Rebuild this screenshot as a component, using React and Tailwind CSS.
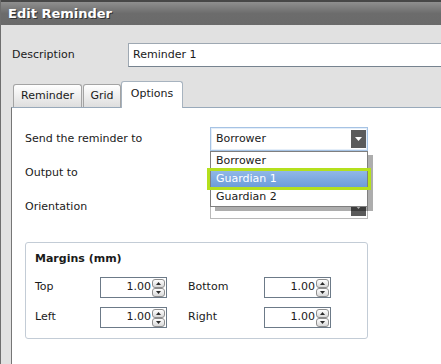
import React from "react";

// small triangle used by select buttons and spinners
const Tri = ({ up, w = 7, h = 4, color = "#fff" }) => (
  <svg width={w} height={h} viewBox={`0 0 ${w} ${h}`}>
    <polygon
      points={up ? `0,${h} ${w / 2},0 ${w},${h}` : `0,0 ${w},0 ${w / 2},${h}`}
      fill={color}
    />
  </svg>
);

const Select = ({ value, focused }) => (
  <div
    className={`flex h-[24px] w-[158px] items-center bg-white pl-[5px] pr-px border ${
      focused
        ? "border-[#a6c3e4] shadow-[inset_0_0_0_1px_#e4eef9]"
        : "border-[#b9b9b9]"
    }`}>
    <span className="flex-1">{value}</span>
    <div className="flex h-[18px] w-[15px] items-center justify-center bg-[#5b5b5b]">
      <Tri />
    </div>
  </div>
);

const SpinBtn = ({ up }) => (
  <div className="flex h-[9px] w-[13px] items-center justify-center rounded-[3px] border border-[#8e8e8e] bg-gradient-to-b from-white to-[#d9d9d9]">
    <Tri up={up} w={5} h={3} color="#2b2b2b" />
  </div>
);

const SpinBox = () => (
  <div className="flex h-[21px] w-[67px] items-center border border-[#6c7a88] bg-white pr-px">
    <span className="flex-1 text-right">1.00</span>
    <div className="ml-px flex flex-col">
      <SpinBtn up />
      <SpinBtn />
    </div>
  </div>
);

const Tab = ({ label, active, width }) =>
  active ? (
    <div
      className={`relative z-10 -mb-px flex h-[27px] ${width} items-start justify-center rounded-t-[3px] border border-b-0 border-[#a7b3bf] bg-white pt-[4px]`}>
      {label}
    </div>
  ) : (
    <div
      className={`flex h-[23px] ${width} items-center justify-center rounded-t-[3px] border border-b-0 border-[#a3a3a3] bg-gradient-to-b from-white to-[#dedede]`}>
      {label}
    </div>
  );

export default function App() {
  return (
    <div className="flex h-[364px] w-[441px] flex-col overflow-hidden border-l border-[#6e6e6e] bg-[#e1e1e1] font-['DejaVu_Sans',Verdana,sans-serif] text-[11px] text-[#1a1a1a]">
      {/* Title bar */}
      <div className="flex h-[25px] shrink-0 items-center border-t-2 border-[#474747] bg-gradient-to-b from-[#8f8f8f] via-[#6c6c6c] to-[#6a6a6a] pl-[7px] text-[13px] font-bold text-white [text-shadow:1px_1px_0_#333]">
        Edit Reminder
      </div>

      {/* Description */}
      <div className="mt-[18px] flex h-[24px] items-center pl-[11px]">
        <span className="w-[116px] shrink-0">Description</span>
        <div className="flex h-[24px] w-[330px] shrink-0 items-center border border-[#9ea8b2] border-b-[#76838f] bg-white pl-[4px]">
          Reminder 1
        </div>
      </div>

      {/* Tabs */}
      <div className="mt-[14px] ml-[12px] flex items-end">
        <Tab label="Reminder" width="w-[69px]" />
        <div className="w-[1px]" />
        <Tab label="Grid" width="w-[38px]" />
        <Tab label="Options" width="w-[62px]" active />
      </div>

      {/* Tab panel */}
      <div className="ml-[10px] flex flex-1 flex-col border-l border-t border-l-[#767676] border-t-[#98a9ba] bg-white pl-[13px] pt-[19px]">
        <div className="flex flex-col gap-[10px]">
          <div className="flex h-[24px] items-center">
            <span className="w-[185px] shrink-0">Send the reminder to</span>
            <div className="relative">
              <Select value="Borrower" focused />
              {/* open dropdown list */}
              <div className="absolute left-0 top-[24px] z-20 w-[158px] border border-[#7f7f7f] bg-white shadow-[5px_4px_0_rgba(0,0,0,0.32)]">
                <div className="flex h-[18px] items-center pl-[5px] pt-px">Borrower</div>
                <div className="relative flex h-[18px] items-center bg-gradient-to-b from-[#92b9e8] to-[#6b9bd9] pl-[5px] text-white">
                  <span className="absolute -left-[4px] -right-[4px] -top-[2px] -bottom-[2px] border-[3px] border-[#b4e01d]" />
                  Guardian 1
                </div>
                <div className="flex h-[18px] items-center pl-[5px]">Guardian 2</div>
              </div>
            </div>
          </div>
          <div className="flex h-[24px] items-center">
            <span className="w-[185px] shrink-0">Output to</span>
            <Select value="" />
          </div>
          <div className="flex h-[24px] items-center">
            <span className="w-[185px] shrink-0">Orientation</span>
            <Select value="" />
          </div>
        </div>

        {/* Margins group */}
        <div className="mt-[23px] w-[343px] rounded-[3px] border border-[#c3ccd6] pb-[10px] pl-[9px] pt-[9px]">
          <div className="font-bold leading-[13px]">Margins (mm)</div>
          <div className="mt-[12px] flex h-[21px] items-center">
            <span className="w-[65px] shrink-0">Top</span>
            <SpinBox />
            <span className="ml-[21px] w-[76px] shrink-0">Bottom</span>
            <SpinBox />
          </div>
          <div className="mt-[9px] flex h-[21px] items-center">
            <span className="w-[65px] shrink-0">Left</span>
            <SpinBox />
            <span className="ml-[21px] w-[76px] shrink-0">Right</span>
            <SpinBox />
          </div>
        </div>
      </div>
    </div>
  );
}
